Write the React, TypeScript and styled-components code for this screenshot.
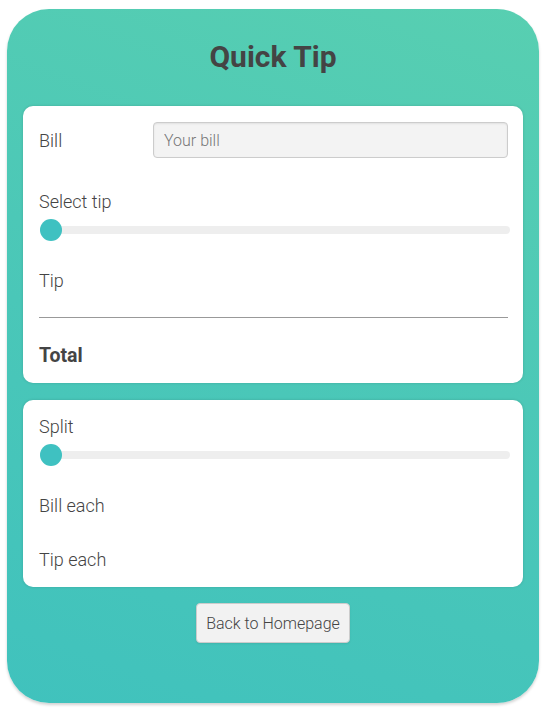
import React from "react";
import styled, { createGlobalStyle } from "styled-components";

const Global = createGlobalStyle`
  html, body { margin: 0; padding: 0; background: #fff; }
  body { font-family: Roboto, "Open Sans", sans-serif; color: #444; }
  * { box-sizing: border-box; }
`;

const Page = styled.div`
  padding: 9px 6px 18px 7px;
`;

const Card = styled.div`
  width: 532px;
  height: 694px;
  border-radius: 42px;
  background: linear-gradient(200deg, #58cfb1 0%, #4cc8b7 45%, #40c2bd 100%);
  box-shadow: 0 2px 3px rgba(0, 0, 0, 0.18);
  padding: 28px 16px 0 16px;
  display: flex;
  flex-direction: column;
`;

const Title = styled.h1`
  margin: 0 0 29px 0;
  text-align: center;
  font-size: 30px;
  line-height: 40px;
  font-weight: 700;
  color: #444;
`;

const Panel = styled.div<{ $pt: number; $pb: number; $mb: number }>`
  background: #fff;
  border-radius: 10px;
  box-shadow: 0 0 3px rgba(0, 0, 0, 0.15);
  padding: ${(p) => p.$pt}px 15px ${(p) => p.$pb}px 16px;
  display: flex;
  flex-direction: column;
  margin-bottom: ${(p) => p.$mb}px;
`;

const Row = styled.div`
  display: flex;
  align-items: center;
  height: 36px;
`;

const Label = styled.div<{ $mt?: number; $bold?: boolean }>`
  font-size: ${(p) => (p.$bold ? 19.5 : 18)}px;
  line-height: 24px;
  padding-top: 1px;
  font-weight: ${(p) => (p.$bold ? 700 : 300)};
  color: #444;
  margin-top: ${(p) => p.$mt ?? 0}px;
`;

const RowLabel = styled(Label)`
  width: 114px;
  padding-top: 2px;
`;

const BillInput = styled.input`
  flex: 1;
  height: 36px;
  background: #f3f3f3;
  border: 1px solid #ccc;
  border-radius: 4px;
  padding: 0 10px;
  font-family: Roboto, sans-serif;
  font-size: 16px;
  font-weight: 300;
  color: #444;
  box-shadow: inset 0 1px 2px rgba(0, 0, 0, 0.08);
  outline: none;
  &::placeholder { color: #777; }
`;

const Slider = styled.input`
  -webkit-appearance: none;
  appearance: none;
  width: calc(100% + 1px);
  height: 22px;
  margin: 5px 0 0 1px;
  background: transparent;
  &::-webkit-slider-runnable-track {
    height: 8px;
    background: #eeeeee;
    border-radius: 4px;
  }
  &::-webkit-slider-thumb {
    -webkit-appearance: none;
    width: 22px;
    height: 22px;
    border-radius: 50%;
    background: #3fc1c1;
    margin-top: -7px;
    border: none;
  }
`;

const Divider = styled.hr`
  border: none;
  border-top: 1px solid #999;
  margin: 24px 0 0 0;
  height: 0;
`;

const ButtonWrap = styled.div`
  display: flex;
  justify-content: center;
`;

const Button = styled.button`
  width: 154px;
  height: 40px;
  background: #f2f2f2;
  border: 1px solid #ccc;
  border-radius: 4px;
  font-family: Roboto, sans-serif;
  font-size: 16px;
  font-weight: 300;
  color: #444;
  padding: 0;
  box-shadow: 0 1px 2px rgba(0, 0, 0, 0.08);
`;

export default function App() {
  return (
    <>
      <Global />
      <Page>
        <Card>
          <Title>Quick Tip</Title>
          <Panel $pt={16} $pb={15} $mb={17}>
            <Row>
              <RowLabel>Bill</RowLabel>
              <BillInput placeholder="Your bill" />
            </Row>
            <Label $mt={31}>Select tip</Label>
            <Slider type="range" min={0} max={30} defaultValue={0} />
            <Label $mt={27}>Tip</Label>
            <Divider />
            <Label $mt={25} $bold>Total</Label>
          </Panel>
          <Panel $pt={14} $pb={15} $mb={16}>
            <Label>Split</Label>
            <Slider type="range" min={1} max={10} defaultValue={1} />
            <Label $mt={27}>Bill each</Label>
            <Label $mt={29}>Tip each</Label>
          </Panel>
          <ButtonWrap>
            <Button>Back to Homepage</Button>
          </ButtonWrap>
        </Card>
      </Page>
    </>
  );
}
